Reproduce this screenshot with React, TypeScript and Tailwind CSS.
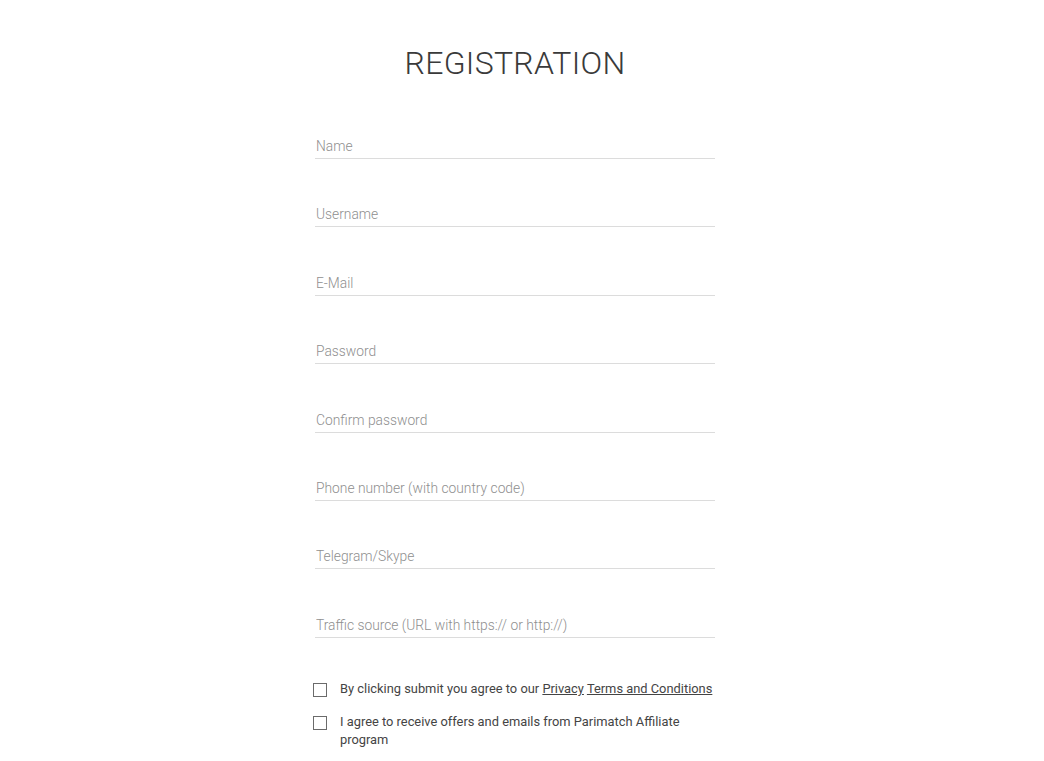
import { useState } from 'react';

const fields = [
    'Name',
    'Username',
    'E-Mail',
    'Password',
    'Confirm password',
    'Phone number (with country code)',
    'Telegram/Skype',
    'Traffic source (URL with https:// or http://)',
];

function Agree({ children }: { children: React.ReactNode }) {
    const [checked, setChecked] = useState(false);
    return (
        <label className="flex items-start cursor-pointer">
            <input
                type="checkbox"
                checked={checked}
                onChange={(e) => setChecked(e.target.checked)}
                className="appearance-none shrink-0 w-[14px] h-[14px] mt-[3px] ml-[-2px] mr-[13px] border border-[#6b6b6b] bg-white checked:bg-[#333]"
            />
            <span className="text-[12.86px] leading-[18px] text-[#444]">{children}</span>
        </label>
    );
}

export default function App() {
    return (
        <div className="h-screen overflow-hidden bg-white pr-[14px] font-['Roboto','Liberation_Sans',sans-serif]">
            <div className="w-[400px] mx-auto pt-[43px]">
                <h1 className="text-center text-[32px] leading-[40px] font-light text-[#3a3a3a] tracking-[0.3px]">
                    REGISTRATION
                </h1>
                <form className="mt-[51px] flex flex-col gap-[43.4px]">
                    {fields.map((f) => (
                        <input
                            key={f}
                            type={f.toLowerCase().includes('password') ? 'password' : 'text'}
                            placeholder={f}
                            className="w-full h-[25px] pl-px border-b border-[#dcdcdc] text-[13.8px] font-light text-[#333] placeholder:text-[#8f8f8f] outline-none bg-transparent"
                        />
                    ))}
                </form>
                <div className="mt-[42.5px] flex flex-col gap-[15px]">
                    <Agree>
                        By clicking submit you agree to our <a href="#" className="underline">Privacy</a>{' '}
                        <a href="#" className="underline">Terms and Conditions</a>
                    </Agree>
                    <Agree>I agree to receive offers and emails from Parimatch Affiliate program</Agree>
                </div>
            </div>
        </div>
    );
}
